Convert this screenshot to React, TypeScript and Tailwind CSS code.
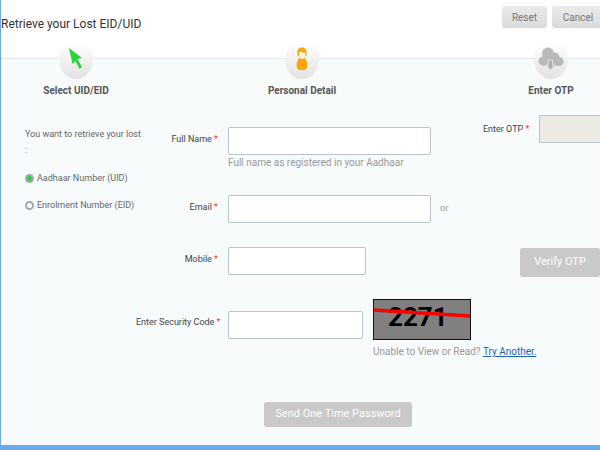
import type { ReactNode } from 'react';

const inputClass =
  'block h-7 rounded-[2px] border border-[#b4c6c8] bg-white px-2 text-xs text-[#444] outline-none';

function Required() {
  return <span className="text-[#f03c3c]"> *</span>;
}

function Step({ title, className, children }: { title: string; className?: string; children: ReactNode }) {
  return (
    <li className={`flex flex-col items-center ${className ?? ''}`}>
      <span className="-mt-5 flex h-10 w-[34px] items-center justify-center rounded-[50%] bg-linear-to-b from-white from-10% to-[#e2e2e2]">
        {children}
      </span>
      <span className="mt-1 text-[10px] leading-4 font-bold whitespace-nowrap text-[#555]">{title}</span>
    </li>
  );
}

function Field({ id, label, children }: { id: string; label: string; children: ReactNode }) {
  return (
    <div className="grid grid-cols-[82px_1fr] gap-x-[10px]">
      <label htmlFor={id} className="pt-1 text-right text-[9px] leading-4 whitespace-nowrap text-[#444]">
        {label}
        <Required />
      </label>
      <div>{children}</div>
    </div>
  );
}

export default function App() {
  return (
    <div className="flex min-h-screen flex-col overflow-hidden border-b-[5px] border-l border-[#6aaaea] bg-[#f7fbfc] font-[Roboto,'Liberation_Sans',sans-serif]">
      {/* Header */}
      <header className="flex h-[58px] items-start justify-between bg-white">
        <h1 className="pt-[14px] text-xs leading-5 text-[#333]">Retrieve your Lost EID/UID</h1>
        <div className="-mr-1 flex gap-[5px] pt-[6px]">
          <button type="button" className="h-[22px] w-[45px] rounded-[3px] bg-linear-to-b from-[#ebebeb] to-[#dadada] text-[10px] text-[#777]">
            Reset
          </button>
          <button type="button" className="h-[22px] w-[52px] rounded-[3px] bg-linear-to-b from-[#ebebeb] to-[#dadada] text-[10px] text-[#777]">
            Cancel
          </button>
        </div>
      </header>

      {/* Steps */}
      <ol className="grid grid-cols-[150px_1fr_98px] border-t border-[#dfe8ea]">
        <Step title="Select UID/EID">
          <svg viewBox="0 0 14 22" className="h-[22px] w-[14px]" aria-hidden="true">
            <path d="M0 0 L13 10 L8.5 11 L13 19 L10.5 21 L6.5 13 L3.5 16 Z" fill="#2bd13c" />
          </svg>
        </Step>
        <Step title="Personal Detail" className="pr-[49px]">
          <svg viewBox="0 0 12 24" className="h-6 w-3" aria-hidden="true">
            <path d="M1.5 8 C0.5 3 2.5 0.5 6 0.5 C9.5 0.5 11.5 3 10.5 8 L9.5 10 L9 5.5 C7 6 4.5 5.5 3.5 4.5 L2.8 10 Z" fill="#f8a90a" />
            <path d="M3.4 4.8 C5 6 7 6 9 5.5 C9.3 8.5 8 10.5 6 10.5 C4 10.5 3 8.5 3.4 4.8 Z" fill="#fff6dc" />
            <path d="M3.5 11 Q6 13 8.5 11 C11 12.5 11.5 16 11 21 Q10.5 23 8 23 H4 Q1.5 23 1 21 C0.5 16 1 12.5 3.5 11 Z" fill="#ffa408" />
          </svg>
        </Step>
        <Step title="Enter OTP">
          <svg viewBox="0 0 26 24" className="h-6 w-[26px]" aria-hidden="true">
            <g fill="#b9b9b9">
              <circle cx="10" cy="6.5" r="6" />
              <circle cx="17" cy="10" r="4.5" />
              <circle cx="5" cy="14" r="4.5" />
              <circle cx="21" cy="14.5" r="4.5" />
              <path d="M5 9 H20 V18.5 H5 Z" />
            </g>
            <path d="M10.5 13 H14.5 V18 H17 L12.5 23 L8 18 H10.5 Z" fill="#adadad" stroke="#e3e3e3" strokeWidth="1" />
          </svg>
        </Step>
      </ol>

      <form className="flex grow" onSubmit={(e) => e.preventDefault()}>
        {/* Choice of number */}
        <div
          role="radiogroup"
          aria-labelledby="kind-title"
          className="w-[135px] shrink-0 pt-[27px] pl-6 text-[9px] text-[#666]"
        >
          <p id="kind-title" className="leading-4 whitespace-nowrap">
            You want to retrieve your lost
            <br />:
          </p>
          <div className="mt-3 flex flex-col gap-[11px]">
            <label className="flex items-center gap-[3px] leading-4 whitespace-nowrap">
              <input
                type="radio"
                name="kind"
                defaultChecked
                className="size-[9px] shrink-0 appearance-none rounded-full border-2 border-[#a3aaa6] bg-white checked:bg-[#2bd13c]"
              />
              Aadhaar Number (UID)
            </label>
            <label className="flex items-center gap-[3px] leading-4 whitespace-nowrap">
              <input
                type="radio"
                name="kind"
                className="size-[9px] shrink-0 appearance-none rounded-full border-2 border-[#a3aaa6] bg-white checked:bg-[#2bd13c]"
              />
              Enrolment Number (EID)
            </label>
          </div>
        </div>

        {/* Personal detail */}
        <div className="flex min-w-0 grow flex-col gap-6 pt-7">
          <Field id="name" label="Full Name">
            <input id="name" type="text" className={`${inputClass} w-[203px]`} />
            <p className="text-[10px] leading-4 text-[#999]">Full name as registered in your Aadhaar</p>
          </Field>
          <Field id="email" label="Email">
            <div className="flex items-center gap-[9px]">
              <input id="email" type="email" className={`${inputClass} w-[203px]`} />
              <span className="text-[9px] text-[#999]">or</span>
            </div>
          </Field>
          <Field id="mobile" label="Mobile">
            <input id="mobile" type="tel" className={`${inputClass} w-[138px]`} />
          </Field>
          <div className="grid grid-cols-[82px_135px_1fr] gap-x-[10px]">
            <label htmlFor="code" className="pt-[15px] text-right text-[9px] leading-4 whitespace-nowrap text-[#444]">
              Enter Security Code
              <Required />
            </label>
            <input id="code" type="text" className={`${inputClass} mt-3 w-[135px]`} />
            <div className="whitespace-nowrap">
              <svg viewBox="0 0 98 41" className="h-[41px] w-[98px]" role="img" aria-label="Security code">
                <rect x="0.5" y="0.5" width="97" height="40" fill="#808080" stroke="#111" />
                <text x="15" y="27" className="text-[26px] font-bold" fill="#000">
                  2271
                </text>
                <path d="M1 11 L97 17" stroke="#f00" strokeWidth="3.5" />
              </svg>
              <p className="mt-1 text-[10px] leading-4 text-[#999]">
                Unable to View or Read?{' '}
                <a href="#another" className="text-[#1f5fae] underline">
                  Try Another.
                </a>
              </p>
            </div>
          </div>
          <button type="submit" className="mt-[18px] ml-32 h-[25px] w-[148px] rounded-[3px] bg-[#c9c9c9] text-[11px] text-white">
            Send One Time Password
          </button>
        </div>

        {/* OTP */}
        <div className="flex w-[117px] shrink-0 flex-col pt-4">
          <div className="flex items-center gap-[10px]">
            <label htmlFor="otp" className="text-[9px] leading-4 whitespace-nowrap text-[#444]">
              Enter OTP
              <Required />
            </label>
            <input id="otp" type="text" disabled className="h-7 w-[100px] shrink-0 border border-[#b4c6c8] bg-[#ebebe4]" />
          </div>
          <button type="button" className="mt-[105px] h-[29px] w-20 self-end rounded-[3px] bg-[#c9c9c9] text-[11px] text-white">
            Verify OTP
          </button>
        </div>
      </form>
    </div>
  );
}
